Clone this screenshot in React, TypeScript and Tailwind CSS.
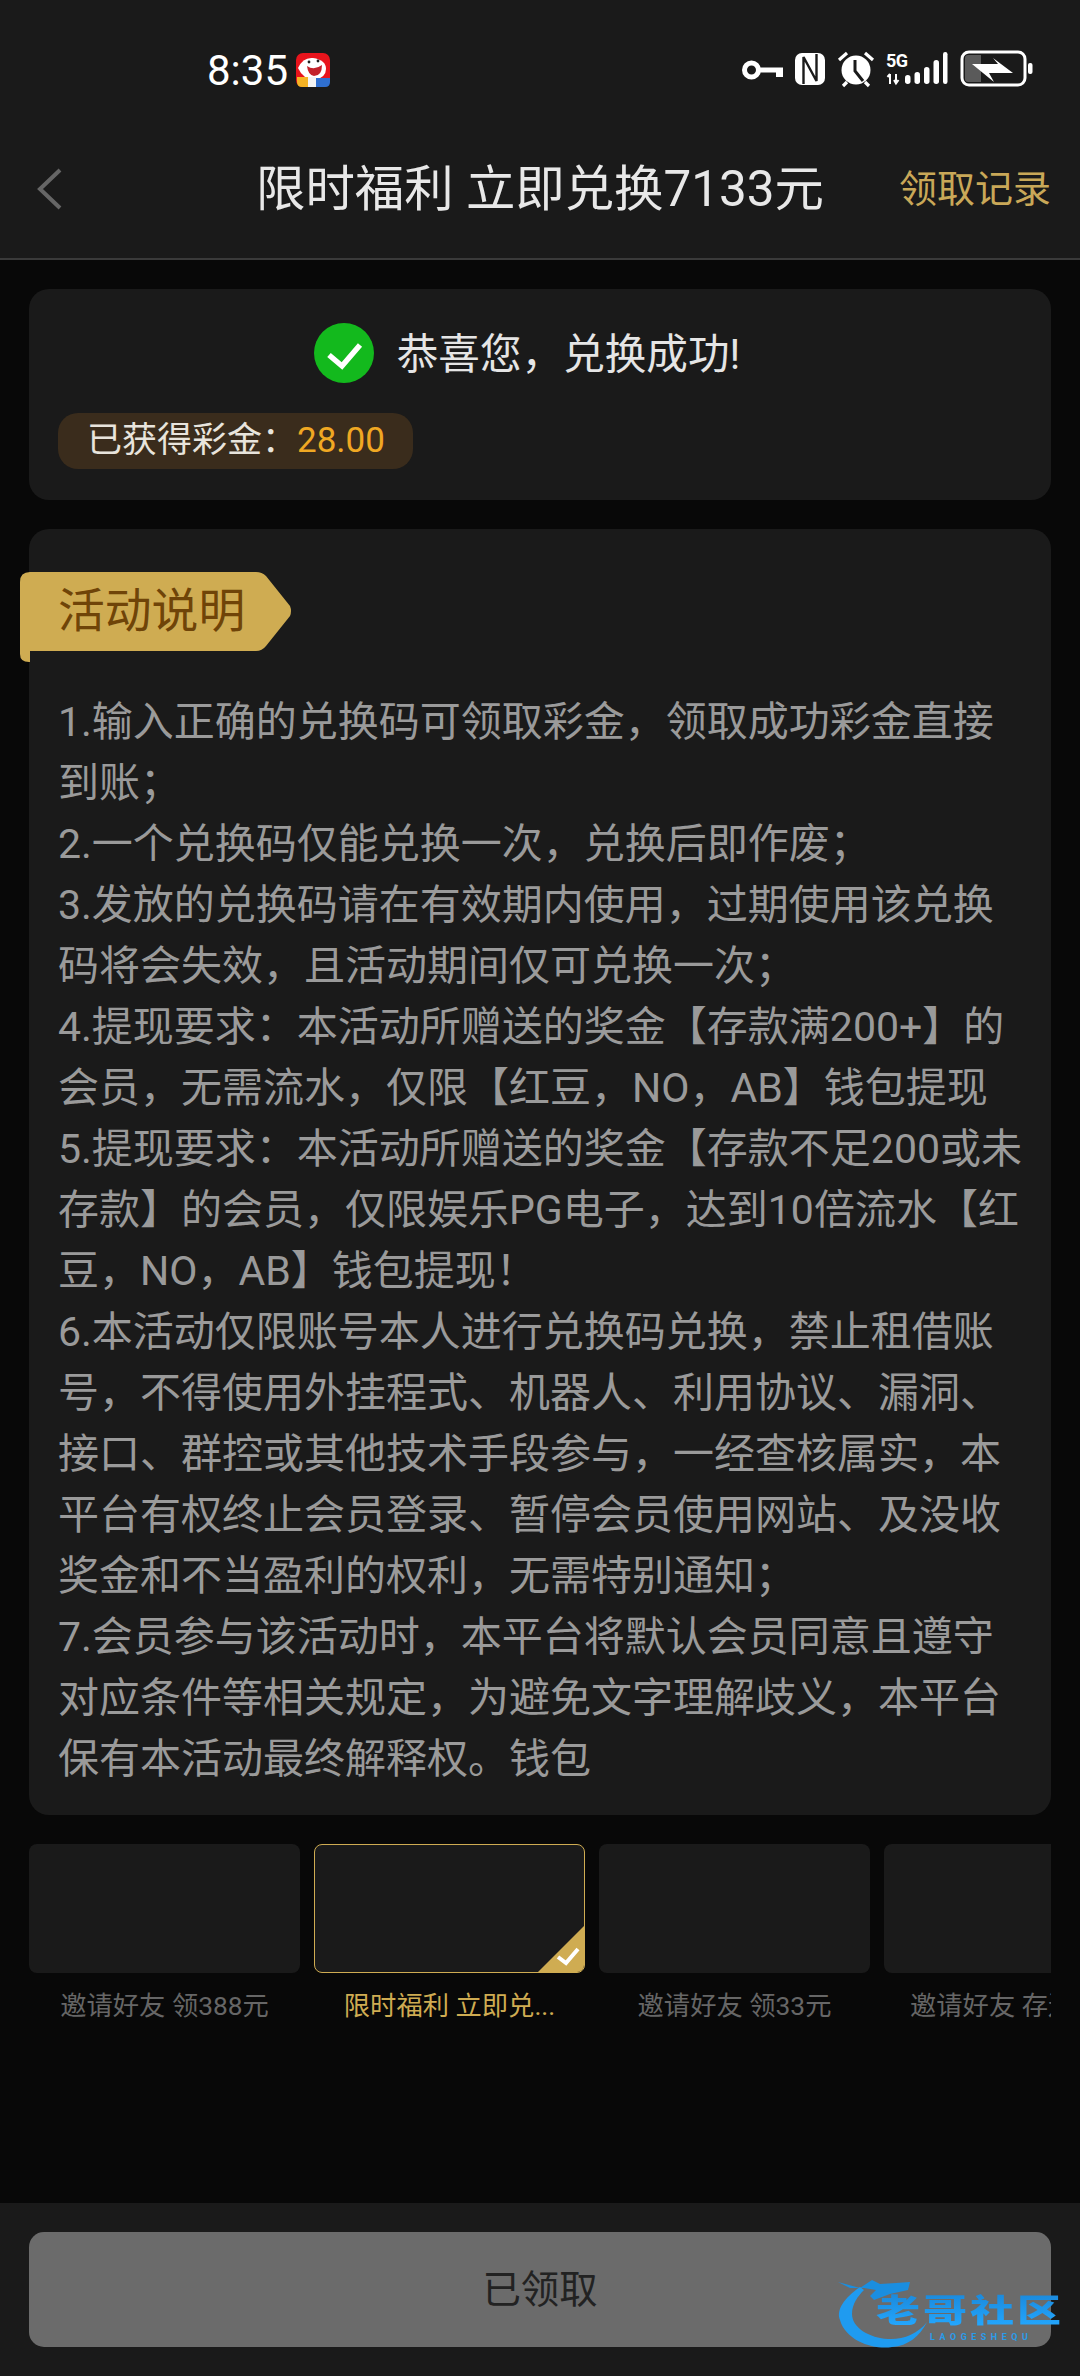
import React from 'react';

const rules = [
    '1.输入正确的兑换码可领取彩金，领取成功彩金直接',
    '到账；',
    '2.一个兑换码仅能兑换一次，兑换后即作废；',
    '3.发放的兑换码请在有效期内使用，过期使用该兑换',
    '码将会失效，且活动期间仅可兑换一次；',
    '4.提现要求：本活动所赠送的奖金【存款满200+】的',
    '会员，无需流水，仅限【红豆，NO，AB】钱包提现',
    '5.提现要求：本活动所赠送的奖金【存款不足200或未',
    '存款】的会员，仅限娱乐PG电子，达到10倍流水【红',
    '豆，NO，AB】钱包提现！',
    '6.本活动仅限账号本人进行兑换码兑换，禁止租借账',
    '号，不得使用外挂程式、机器人、利用协议、漏洞、',
    '接口、群控或其他技术手段参与，一经查核属实，本',
    '平台有权终止会员登录、暂停会员使用网站、及没收',
    '奖金和不当盈利的权利，无需特别通知；',
    '7.会员参与该活动时，本平台将默认会员同意且遵守',
    '对应条件等相关规定，为避免文字理解歧义，本平台',
    '保有本活动最终解释权。钱包',
];

const StatusIcons = () => (
    <svg width="320" height="60" viewBox="0 0 320 60" fill="none">
        {/* key */}
        <circle cx="21.5" cy="30" r="7" stroke="#fff" strokeWidth="5" />
        <path d="M30 27.5H53V37H46V32.5H30Z" fill="#fff" />
        {/* nfc */}
        <rect x="65" y="13" width="30" height="32" rx="7" fill="#fff" />
        <path d="M73.5 44V17L86.5 41V14" stroke="#1a1a1a" strokeWidth="2.4" />
        {/* alarm */}
        <circle cx="126" cy="30" r="14.5" fill="#fff" />
        <path d="M125 20V31L133 41" stroke="#1a1a1a" strokeWidth="3" />
        <path d="M109 20L117 13M143 20L135 13M117 42L113 46M135 42L139 46" stroke="#fff" strokeWidth="3.2" />
        {/* 5G and signal */}
        <text x="156" y="27" fill="#fff" fontSize="18" fontWeight="700" fontFamily="Roboto, sans-serif" textLength="22">5G</text>
        <path d="M160 34V44M157.5 37L160 34M166 34V43M164 40L166 43.5L168.5 40" stroke="#fff" strokeWidth="2" />
        <rect x="175" y="35" width="5.5" height="9" rx="2.7" fill="#fff" />
        <rect x="184.5" y="32" width="5.5" height="12" rx="2.7" fill="#fff" />
        <rect x="194" y="27" width="5.5" height="17" rx="2.7" fill="#fff" />
        <rect x="203.5" y="20" width="5.5" height="24" rx="2.7" fill="#fff" />
        <rect x="213" y="12" width="4.5" height="32" rx="2.2" fill="#fff" />
        {/* battery */}
        <rect x="232" y="12" width="63" height="33" rx="7" stroke="#fff" strokeWidth="3" />
        <path d="M235 18Q235 15 238 15H251V42H238Q235 42 235 39Z" fill="#5a5a5a" />
        <path d="M242 24H268L263 18L283 33H259L264 42Z" fill="#fff" />
        <rect x="298" y="23" width="4.5" height="11" rx="2" fill="#fff" />
    </svg>
);

const AppBadge = () => (
    <svg width="34" height="34" viewBox="0 0 34 34">
        <rect width="34" height="34" rx="7" fill="#e8141c" />
        <path d="M2 15Q7 4 17 5Q30 7 30 16Q30 25 18 27Q7 26 2 15Z" fill="#fff" />
        <path d="M11 13Q18 18 26 12Q26 23 18 23Q12 22 11 13Z" fill="#c3222a" />
        <circle cx="13" cy="9" r="1.4" fill="#222" />
        <circle cx="22" cy="8" r="1.4" fill="#222" />
        <path d="M1 24H12V34H6Q1 34 1 29Z" fill="#f5b324" />
        <path d="M12 24H20V34H12Z" fill="#f4f4f4" />
        <path d="M20 25H34V29Q34 34 29 34H20Z" fill="#2f6fd0" />
    </svg>
);

const Watermark = () => (
    <div className="absolute left-[830px] top-[2276px] w-[250px] h-[74px] pointer-events-none">
        <svg className="absolute left-0 top-0" width="250" height="74" viewBox="0 0 250 74" fill="none">
            <path d="M30 11C14 22 6 34 10 44C16 66 46 74 62 71C78 70 90 60 97 46C88 58 72 64 58 63C40 62 22 52 22 38C22 28 28 20 34 14Z" fill="#1f9bf0" />
            <path d="M8 6L30 12L42 4L50 8L66 7L80 6L78 14L60 18L44 24L40 20L46 14L34 12L20 12Z" fill="#1a8ee0" />
        </svg>
        <div className="absolute left-[46px] top-[14px] origin-top-left scale-y-[0.72] text-[44px] leading-[52px] font-black tracking-[3px] bg-gradient-to-b from-[#1a86d8] to-[#24a8ff] bg-clip-text text-transparent whitespace-nowrap font-['Noto_Sans_CJK_SC',sans-serif]">
            老哥社区
        </div>
        <div className="absolute left-[100px] top-[56px] text-[9px] leading-[11px] font-bold tracking-[4.5px] text-[#2a9be8] whitespace-nowrap font-['Roboto',sans-serif]">
            LAOGESHEQU
        </div>
    </div>
);

const Thumb = ({ label, active, clipped }: { label: string; active?: boolean; clipped?: boolean }) => (
    <div className="w-[271px] shrink-0 flex flex-col">
        <div className={`relative h-[129px] rounded-[8px] bg-[#1a1a1a] overflow-hidden ${active ? 'border-[1.5px] border-[#cfac52]' : ''}`}>
            {active && (
                <svg className="absolute right-[-1.5px] bottom-[-1.5px]" width="50" height="50" viewBox="0 0 50 50">
                    <path d="M50 0V50H0Z" fill="#cfac52" />
                    <path d="M22 33L30 39L42 25" stroke="#fff" strokeWidth="4" fill="none" />
                </svg>
            )}
        </div>
        <div className={`mt-[15px] text-[26.3px] leading-[36px] whitespace-nowrap ${clipped ? 'pl-[26px] text-left' : 'text-center'} ${active ? 'text-[#cfac52]' : 'text-[#666666]'}`}>
            {label}
        </div>
    </div>
);

export default function App() {
    return (
        <div className="relative w-[1080px] h-[2376px] overflow-hidden flex flex-col bg-[#080808] font-['Roboto','Noto_Sans_CJK_SC',sans-serif]">
            {/* Status bar + header */}
            <div className="h-[260px] shrink-0 bg-[#1a1a1a] border-b-2 border-[#3a3a3a] flex flex-col">
                <div className="h-[140px] pt-[40px] flex items-start">
                    <div className="ml-[207px] flex items-center h-[60px] text-[42px] text-white">
                        <span>8:35</span>
                        <span className="ml-[8px] flex"><AppBadge /></span>
                    </div>
                    <div className="ml-auto mr-[30px]"><StatusIcons /></div>
                </div>
                <div className="relative flex items-center justify-center h-[98px]">
                    <svg className="absolute left-[36px] top-[28px]" width="28" height="42" viewBox="0 0 28 42" fill="none">
                        <path d="M24 2L4 21L24 40" stroke="#666" strokeWidth="4" />
                    </svg>
                    <span className="text-[49.4px] text-[#e8e8e8]">限时福利 立即兑换7133元</span>
                    <span className="absolute right-[29px] text-[38px] text-[#c9a858]">领取记录</span>
                </div>
            </div>

            <div className="px-[29px] pt-[29px] flex flex-col">
                {/* Success card */}
                <div className="h-[211px] rounded-[20px] bg-[#1a1a1a] px-[29px] pt-[34px]">
                    <div className="flex items-center justify-center gap-[23px] pr-[26px]">
                        <svg width="60" height="60" viewBox="0 0 60 60" fill="none">
                            <circle cx="30" cy="30" r="30" fill="#13b91d" />
                            <path d="M15 32L28 43L46 22" stroke="#fff" strokeWidth="5.5" />
                        </svg>
                        <span className="text-[41.6px] leading-[60px] text-[#e5e5e5] translate-y-[2px]">恭喜您，兑换成功!</span>
                    </div>
                    <div className="mt-[30px] w-[355px] h-[56px] rounded-[20px] bg-[#3a2c1c] flex items-center pl-[29px] text-[35px]">
                        <span className="text-[#e8e4dc]">已获得彩金：</span>
                        <span className="text-[#f0a823]">28.00</span>
                    </div>
                </div>

                {/* Rules card */}
                <div className="mt-[29px] rounded-[20px] bg-[#1a1a1a] pt-[43px] pb-[25px]">
                    <div className="relative ml-[-9px] w-[272px] h-[90px] flex items-start">
                        <svg className="absolute left-0 top-0" width="272" height="90" viewBox="0 0 272 90">
                            <path d="M0 88V10Q0 0 10 0H236Q242 0 246 4L270 34Q272 39 270 44L246 74Q242 79 236 79H10V90H9Q0 90 0 82Z" fill="#cfac52" />
                        </svg>
                        <span className="relative ml-[38px] mt-[8px] text-[46.8px] leading-[62px] text-[#6f4408]">活动说明</span>
                    </div>
                    <div className="mt-[30px] pl-[29px] text-[41px] leading-[61px] text-[#9a9a9a] whitespace-nowrap">
                        {rules.map((line) => (
                            <div key={line}>{line}</div>
                        ))}
                    </div>
                </div>

                {/* Activity thumbnails */}
                <div className="mt-[29px] flex gap-[14px] overflow-hidden">
                    <Thumb label="邀请好友 领388元" />
                    <Thumb label="限时福利 立即兑..." active />
                    <Thumb label="邀请好友 领33元" />
                    <Thumb label="邀请好友 存送彩金" clipped />
                </div>
            </div>

            {/* Bottom button */}
            <div className="mt-auto h-[173px] shrink-0 bg-[#1a1a1a] px-[29px] pt-[29px]">
                <div className="h-[115px] rounded-[15px] bg-[#6b6b6b] flex items-center justify-center text-[38.4px] text-[#222222]">
                    已领取
                </div>
            </div>

            <Watermark />
        </div>
    );
}
